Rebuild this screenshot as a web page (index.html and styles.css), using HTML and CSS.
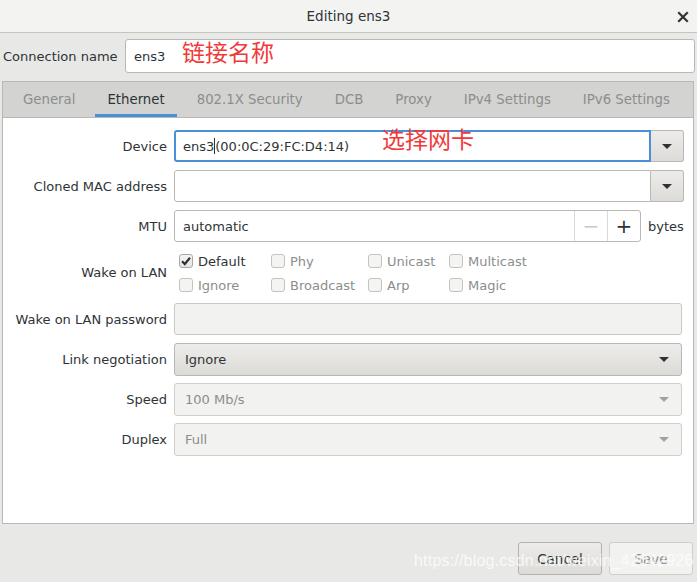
FILE: index.html
```html
<!DOCTYPE html>
<html>
<head>
    <title>Editing ens3</title>
    <link rel="stylesheet" href="styles.css">
</head>
<body>
    <div class="window">
        <div class="titlebar">
            <span class="title">Editing ens3</span>
            <span class="close">
                <svg width="12" height="12" viewBox="0 0 12 12"><path d="M2 2 L10 10 M10 2 L2 10" stroke="#2e3436" stroke-width="2.2" stroke-linecap="square"/></svg>
            </span>
        </div>

        <div class="name-row">
            <label class="name-label">Connection name</label>
            <div class="entry name-entry">ens3 <span class="note note-name">链接名称</span></div>
        </div>

        <div class="notebook">
            <div class="tabs">
                <span class="tab">General</span>
                <span class="tab active">Ethernet</span>
                <span class="tab">802.1X Security</span>
                <span class="tab">DCB</span>
                <span class="tab">Proxy</span>
                <span class="tab">IPv4 Settings</span>
                <span class="tab">IPv6 Settings</span>
            </div>

            <div class="page">
                <div class="form">
                    <label class="lbl">Device</label>
                    <div class="combo">
                        <div class="entry focus">ens3<span class="caret"></span>(00:0C:29:FC:D4:14)<span class="note note-dev">选择网卡</span></div>
                        <div class="combo-btn"><span class="arrow"></span></div>
                    </div>

                    <label class="lbl">Cloned MAC address</label>
                    <div class="combo">
                        <div class="entry"></div>
                        <div class="combo-btn"><span class="arrow"></span></div>
                    </div>

                    <label class="lbl">MTU</label>
                    <div class="mtu">
                        <div class="spin">
                            <div class="spin-text">automatic</div>
                            <div class="spin-btn dim">&minus;</div>
                            <div class="spin-btn">+</div>
                        </div>
                        <span class="unit">bytes</span>
                    </div>

                    <label class="lbl">Wake on LAN</label>
                    <div class="checks">
                        <span class="check on"><span class="box"><svg width="12" height="12" viewBox="0 0 12 12"><path d="M2 6.2 L4.8 9 L10 2.8" fill="none" stroke="#2e3436" stroke-width="2.2"/></svg></span>Default</span>
                        <span class="check"><span class="box"></span>Phy</span>
                        <span class="check"><span class="box"></span>Unicast</span>
                        <span class="check"><span class="box"></span>Multicast</span>
                        <span class="check"><span class="box"></span>Ignore</span>
                        <span class="check"><span class="box"></span>Broadcast</span>
                        <span class="check"><span class="box"></span>Arp</span>
                        <span class="check"><span class="box"></span>Magic</span>
                    </div>

                    <label class="lbl">Wake on LAN password</label>
                    <div class="entry disabled wide"></div>

                    <label class="lbl">Link negotiation</label>
                    <div class="button-combo wide"><span>Ignore</span><span class="arrow"></span></div>

                    <label class="lbl">Speed</label>
                    <div class="button-combo wide off"><span>100 Mb/s</span><span class="arrow"></span></div>

                    <label class="lbl">Duplex</label>
                    <div class="button-combo wide off"><span>Full</span><span class="arrow"></span></div>
                </div>
            </div>
        </div>

        <div class="actions">
            <button class="btn">Cancel</button>
            <button class="btn off">Save</button>
            <span class="watermark">https://blog.csdn.net/weixin_42042926</span>
        </div>
    </div>
</body>
</html>
```

FILE: styles.css
```css
body { margin: 0; font-family: "DejaVu Sans", sans-serif; font-size: 13px; color: #2e3436; background: #e8e8e7; }
.window { width: 697px; height: 582px; display: flex; flex-direction: column; background: #e8e8e7; overflow: hidden; }

.titlebar { height: 33px; flex: none; display: flex; align-items: center; justify-content: center; position: relative; background: #f3f3f2; border-bottom: 1px solid #c4c4c1; box-sizing: border-box; font-size: 13.5px; color: #2e3436; }
.close { position: absolute; right: 8px; top: 10px; width: 12px; height: 12px; }

.name-row { display: flex; align-items: center; height: 34px; margin: 6px 2px 0 3px; }
.name-label { width: 122px; flex: none; }
.entry { position: relative; flex: 1; height: 100%; box-sizing: border-box; background: #fff; border: 1px solid #b8b8b5; border-radius: 3px; display: flex; align-items: center; padding-left: 8px; white-space: nowrap; }
.name-entry { height: 34px; }

.note { position: absolute; color: #f03a3a; font-family: "Noto Sans CJK SC", sans-serif; font-size: 23px; line-height: 1; }
.note-name { left: 56px; top: 0px; }
.note-dev { left: 206px; top: -5px; }

.notebook { margin: 8px 3px 0 2px; height: 443px; display: flex; flex-direction: column; border: 1px solid #b8b8b5; box-sizing: border-box; flex: none; }
.tabs { height: 35px; flex: none; display: flex; padding-left: 8px; gap: 8px; background: #d3d3d1; border-bottom: 1px solid #b8b8b5; overflow: hidden; }
.tab { flex: none; white-space: nowrap; padding: 0 12px; display: flex; align-items: center; color: #8b8e8c; border-bottom: 3px solid transparent; padding-top: 3px; font-size: 13.3px; }
.tab.active { color: #2e3436; border-bottom-color: #4a90d9; }
.page { flex: 1; background: #fff; padding: 12px 12px 0 0; }

.form { display: grid; grid-template-columns: 164px 1fr; column-gap: 7px; row-gap: 8px; grid-template-rows: 32px 32px 32px 45px 32px 32px 32px 32px; }
.lbl { text-align: right; align-self: center; }

.combo { display: flex; height: 32px; }
.combo .entry { border-radius: 3px 0 0 3px; }
.entry.focus { border: 2px solid #4a90d9; padding-left: 7px; }
.caret { display: inline-block; width: 1px; height: 16px; background: #2e3436; }
.combo-btn { width: 33px; flex: none; box-sizing: border-box; border: 1px solid #b8b8b5; border-left: none; border-radius: 0 3px 3px 0; background: linear-gradient(#edecea, #dddbd7); display: flex; align-items: center; justify-content: center; }
.arrow { width: 0; height: 0; border-left: 5px solid transparent; border-right: 5px solid transparent; border-top: 5px solid #2e3436; }

.mtu { display: flex; align-items: center; gap: 7px; }
.spin { display: flex; width: 467px; height: 32px; box-sizing: border-box; border: 1px solid #b8b8b5; border-radius: 3px; background: #fff; }
.spin-text { flex: 1; display: flex; align-items: center; padding-left: 8px; }
.spin-btn { width: 32px; border-left: 1px solid #dadad8; display: flex; align-items: center; justify-content: center; font-size: 20px; color: #2e3436; }
.spin-btn.dim { color: #c8c8c6; }

.checks { display: grid; grid-template-columns: 92px 97px 81px auto; grid-template-rows: 22px 22px; row-gap: 2px; padding-left: 5px; }
.check { display: flex; align-items: center; gap: 5px; color: #8b8e8c; }
.check.on { color: #2e3436; }
.box { width: 14px; height: 14px; box-sizing: border-box; border: 1px solid #c3c3c0; border-radius: 3px; background: #f4f4f3; display: flex; align-items: center; justify-content: center; }
.check.on .box { border-color: #a9a9a6; background: linear-gradient(#f4f4f3, #e6e5e3); }

.entry.disabled { background: #f2f2f1; border-color: #c8c8c5; }
.wide { width: 508px; }

.button-combo { box-sizing: border-box; height: 33px; display: flex; align-items: center; justify-content: space-between; padding: 0 12px 0 10px; border: 1px solid #b8b8b5; border-radius: 3px; background: linear-gradient(#edecea, #dddbd7); }
.button-combo.off { background: #f2f2f1; border-color: #cfcfcc; color: #8b8e8c; }
.button-combo.off .arrow { border-top-color: #a0a3a2; }

.actions { flex: 1; display: flex; justify-content: flex-end; align-items: flex-end; gap: 7px; padding: 0 4px 7px 0; position: relative; }
.btn { width: 84px; height: 33px; font-family: "DejaVu Sans", sans-serif; font-size: 13.5px; color: #2e3436; border: 1px solid #b2b2af; border-radius: 3px; background: linear-gradient(#edecea, #dddbd7); }
.btn.off { background: #f2f2f1; border-color: #cfcfcc; color: #8b8e8c; }
.watermark { position: absolute; left: 414px; bottom: 12px; color: rgba(255, 255, 255, 0.75); font-family: "Liberation Sans", sans-serif; font-size: 16px; letter-spacing: 0.2px; }
```
